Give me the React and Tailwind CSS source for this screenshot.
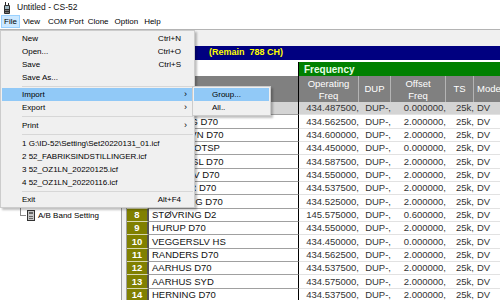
import React from 'react';

const rows = [
  ['0', 'HJORRING D70', '434.487500', '0.000000'],
  ['1', 'AALBORG D70', '434.562500', '2.000000'],
  ['2', 'FREDHAVN D70', '434.600000', '2.000000'],
  ['3', 'NRSBY HOTSP', '434.450000', '0.000000'],
  ['4', 'BRNDERSL D70', '434.587500', '2.000000'],
  ['5', 'LOKKEN V D70', '434.550000', '2.000000'],
  ['6', 'HOBRO R D70', '434.537500', '2.000000'],
  ['7', 'SOLBJERG D70', '434.525000', '2.000000'],
  ['8', 'STØVRING D2', '145.575000', '0.600000'],
  ['9', 'HURUP D70', '434.550000', '2.000000'],
  ['10', 'VEGGERSLV HS', '434.450000', '0.000000'],
  ['11', 'RANDERS D70', '434.562500', '2.000000'],
  ['12', 'AARHUS D70', '434.537500', '2.000000'],
  ['13', 'AARHUS SYD', '434.575000', '2.000000'],
  ['14', 'HERNING D70', '434.537500', '2.000000'],
];

const treeItems = [
  { label: 'ID-52', level: 0 },
  { label: 'Memory CH', level: 1 },
  { label: 'Call CH', level: 1 },
  { label: 'DR Setting', level: 1 },
  { label: 'Repeater List', level: 1 },
  { label: 'GPS', level: 1 },
  { label: 'My Station', level: 1 },
  { label: 'Scan Setting', level: 1 },
  { label: 'Display', level: 1 },
  { label: 'Sound', level: 1 },
  { label: 'Function', level: 1 },
  { label: 'Common Setting', level: 1 },
  { label: 'A/B Band Setting', level: 1, last: true },
];

const menuItems = [
  { label: 'New', key: 'Ctrl+N' },
  { label: 'Open...', key: 'Ctrl+O' },
  { label: 'Save', key: 'Ctrl+S' },
  { label: 'Save As...' },
  { sep: 'h-[4px]' },
  { label: 'Import', sub: true, active: true },
  { label: 'Export', sub: true },
  { sep: 'h-[5px]' },
  { label: 'Print', sub: true },
  { sep: 'h-[5px]' },
  { label: '1 G:\\ID-52\\Setting\\Set20220131_01.icf' },
  { label: '2 52_FABRIKSINDSTILLINGER.icf' },
  { label: '3 52_OZ1LN_20220125.icf' },
  { label: '4 52_OZ1LN_20220116.icf' },
  { sep: 'h-[4px]' },
  { label: 'Exit', key: 'Alt+F4' },
];

const RadioIcon = () => (
  <svg width="8" height="12" viewBox="0 0 8 12">
    <rect x="2" y="0" width="1" height="3" fill="#2a2a2a" />
    <rect x="5" y="1" width="1" height="2" fill="#2a2a2a" />
    <rect x="1" y="3" width="6" height="9" rx="1" fill="#2f2f2f" />
    <rect x="2" y="4" width="4" height="3" fill="#9fb7c0" />
    <rect x="2" y="8" width="4" height="1" fill="#777" />
    <rect x="2" y="10" width="4" height="1" fill="#777" />
  </svg>
);

const TreeIcon = () => (
  <svg width="8" height="11" viewBox="0 0 8 11">
    <rect x="0.5" y="0.5" width="7" height="10" fill="#c8c8c8" stroke="#333" />
    <rect x="2" y="2" width="4" height="2" fill="#666" />
    <rect x="2" y="6" width="4" height="1" fill="#666" />
    <rect x="2" y="8" width="4" height="1" fill="#666" />
  </svg>
);

export default function App() {
  return (
    <div className="relative w-[500px] h-[300px] overflow-hidden bg-white text-black font-['Liberation_Sans',Arial,sans-serif] flex flex-col">
      {/* title bar */}
      <div className="h-[15px] flex items-center pl-[3px] gap-[6px] shrink-0">
        <RadioIcon />
        <span className="text-[8.5px] leading-none text-[#111]">Untitled - CS-52</span>
      </div>

      {/* menu bar */}
      <div className="h-[15px] flex items-stretch text-[8px] border-b border-[#b4b4b4] shrink-0 pl-[1px]">
        <span className="flex items-center px-[2px] bg-[#cce8ff] border border-[#99d1ff] mb-[1px]">File</span>
        <span className="flex items-center ml-[3px]">View</span>
        <span className="flex items-center ml-[8px]">COM Port</span>
        <span className="flex items-center ml-[4px]">Clone</span>
        <span className="flex items-center ml-[6px]">Option</span>
        <span className="flex items-center ml-[6px]">Help</span>
      </div>

      {/* toolbar */}
      <div className="h-[16px] bg-[#f0f0f0] shrink-0" />

      {/* main */}
      <div className="flex flex-1 min-h-0">
        {/* tree */}
        <div className="w-[122px] shrink-0 bg-white border-r border-[#a0a0a0] pt-[7px] text-[8px] overflow-hidden">
          {treeItems.map((t, i) => (
            <div key={i} className="h-[13px] flex items-stretch">
              <div className={t.level === 0 ? 'w-[8px]' : 'w-[20px]'} />
              {t.level > 0 && (
                <div className="w-[6px] flex flex-col">
                  <div className="h-1/2 border-l border-b border-[#8a8a8a]" />
                  <div className={`h-1/2 ${t.last ? '' : 'border-l border-[#8a8a8a]'}`} />
                </div>
              )}
              <div className="flex items-center gap-[3px] pl-[1px]">
                <TreeIcon />
                <span className="leading-none">{t.label}</span>
              </div>
            </div>
          ))}
        </div>

        {/* splitter */}
        <div className="w-[5px] shrink-0 bg-[#f0f0f0] border-r border-[#a0a0a0]" />

        {/* grid */}
        <div className="flex-1 min-w-0 flex flex-col overflow-hidden">
          <div className="h-[14px] shrink-0 bg-[#000080] flex items-center text-[9px] font-bold text-[#ffff00]">
            <span className="w-[82px] pl-[4px] text-white">Memory CH</span>
            <span className="whitespace-pre">(Remain  788 CH)</span>
          </div>
          <div className="h-[2px] shrink-0 bg-white" />
          <div className="h-[14px] shrink-0 flex">
            <div className="w-[172px] shrink-0 bg-white border-r border-black" />
            <div className="flex-1 bg-[#008000] text-[#e6ffe6] text-[10px] font-semibold flex items-center pl-[5px]">Frequency</div>
          </div>
          <div className="h-[26px] shrink-0 flex bg-[#808080] text-white text-[9.5px] leading-[12px] text-center overflow-hidden">
            <div className="w-[22px] shrink-0 border-r-2 border-[#555]" />
            <div className="w-[150px] shrink-0 border-r border-black" />
            <div className="w-[60px] shrink-0 border-r border-[#b4b4b4] pt-[2px]">Operating<br />Freq</div>
            <div className="w-[32px] shrink-0 border-r border-[#b4b4b4] flex items-center justify-center">DUP</div>
            <div className="w-[55px] shrink-0 border-r border-[#b4b4b4] pt-[2px]">Offset<br />Freq</div>
            <div className="w-[28px] shrink-0 border-r border-[#b4b4b4] flex items-center justify-center">TS</div>
            <div className="w-[60px] shrink-0 flex items-center pl-[3px]">Mode</div>
          </div>
          {rows.map((r, i) => {
            const sel = i === 0;
            return (
              <div key={r[0]} className="h-[13.33px] shrink-0 flex text-[9.5px] leading-none">
                <div className="w-[22px] shrink-0 bg-[#808000] border-r-2 border-[#555] border-b border-b-[#d8d8b0] flex items-center justify-center text-white font-bold">{r[0]}</div>
                <div className={`w-[150px] shrink-0 border-r border-black border-b border-b-[#a0a0a0] flex items-center pl-[3px] text-[#111] ${sel ? 'bg-[#d4d4d4]' : 'bg-white'}`}>{r[1]}</div>
                <div className={`flex flex-1 text-[#333] border-b border-[#e2e2e2] ${sel ? 'bg-[#d4d4d4]' : 'bg-white'}`}>
                  <div className="w-[60px] shrink-0 flex items-center justify-end">{r[2]},</div>
                  <div className="w-[32px] shrink-0 flex items-center justify-end">DUP-,</div>
                  <div className="w-[55px] shrink-0 flex items-center justify-end">{r[3]},</div>
                  <div className="w-[28px] shrink-0 flex items-center justify-end">25k,</div>
                  <div className="w-[60px] shrink-0 flex items-center pl-[3px]">DV</div>
                </div>
              </div>
            );
          })}
        </div>
      </div>

      {/* File menu */}
      <div className="absolute left-0 top-[30px] w-[195px] bg-[#f0f0f0] border border-[#cccccc] shadow-[2px_2px_2px_rgba(0,0,0,0.25)] py-[1px] px-[1px] text-[8px] leading-none">
        {menuItems.map((m, i) =>
          m.sep ? (
            <div key={i} className={`${m.sep} flex items-center pl-[20px]`}>
              <div className="h-px w-full bg-[#d7d7d7]" />
            </div>
          ) : (
            <div key={i} className={`h-[13px] flex items-center pl-[20px] pr-[3px] ${m.active ? 'bg-[#91c9f7]' : ''}`}>
              <span className="flex-1 whitespace-nowrap">{m.label}</span>
              {m.key && <span>{m.key}</span>}
              <span className="w-[9px] text-center text-[9px]">{m.sub ? '›' : ''}</span>
            </div>
          )
        )}
      </div>

      {/* Import submenu */}
      <div className="absolute left-[192px] top-[86px] w-[79px] bg-[#f0f0f0] border border-[#cccccc] shadow-[2px_2px_2px_rgba(0,0,0,0.25)] p-[1px] text-[8px] leading-none">
        <div className="h-[13px] flex items-center pl-[18px] bg-[#91c9f7]">Group...</div>
        <div className="h-[13px] flex items-center pl-[18px]">All..</div>
      </div>
    </div>
  );
}
